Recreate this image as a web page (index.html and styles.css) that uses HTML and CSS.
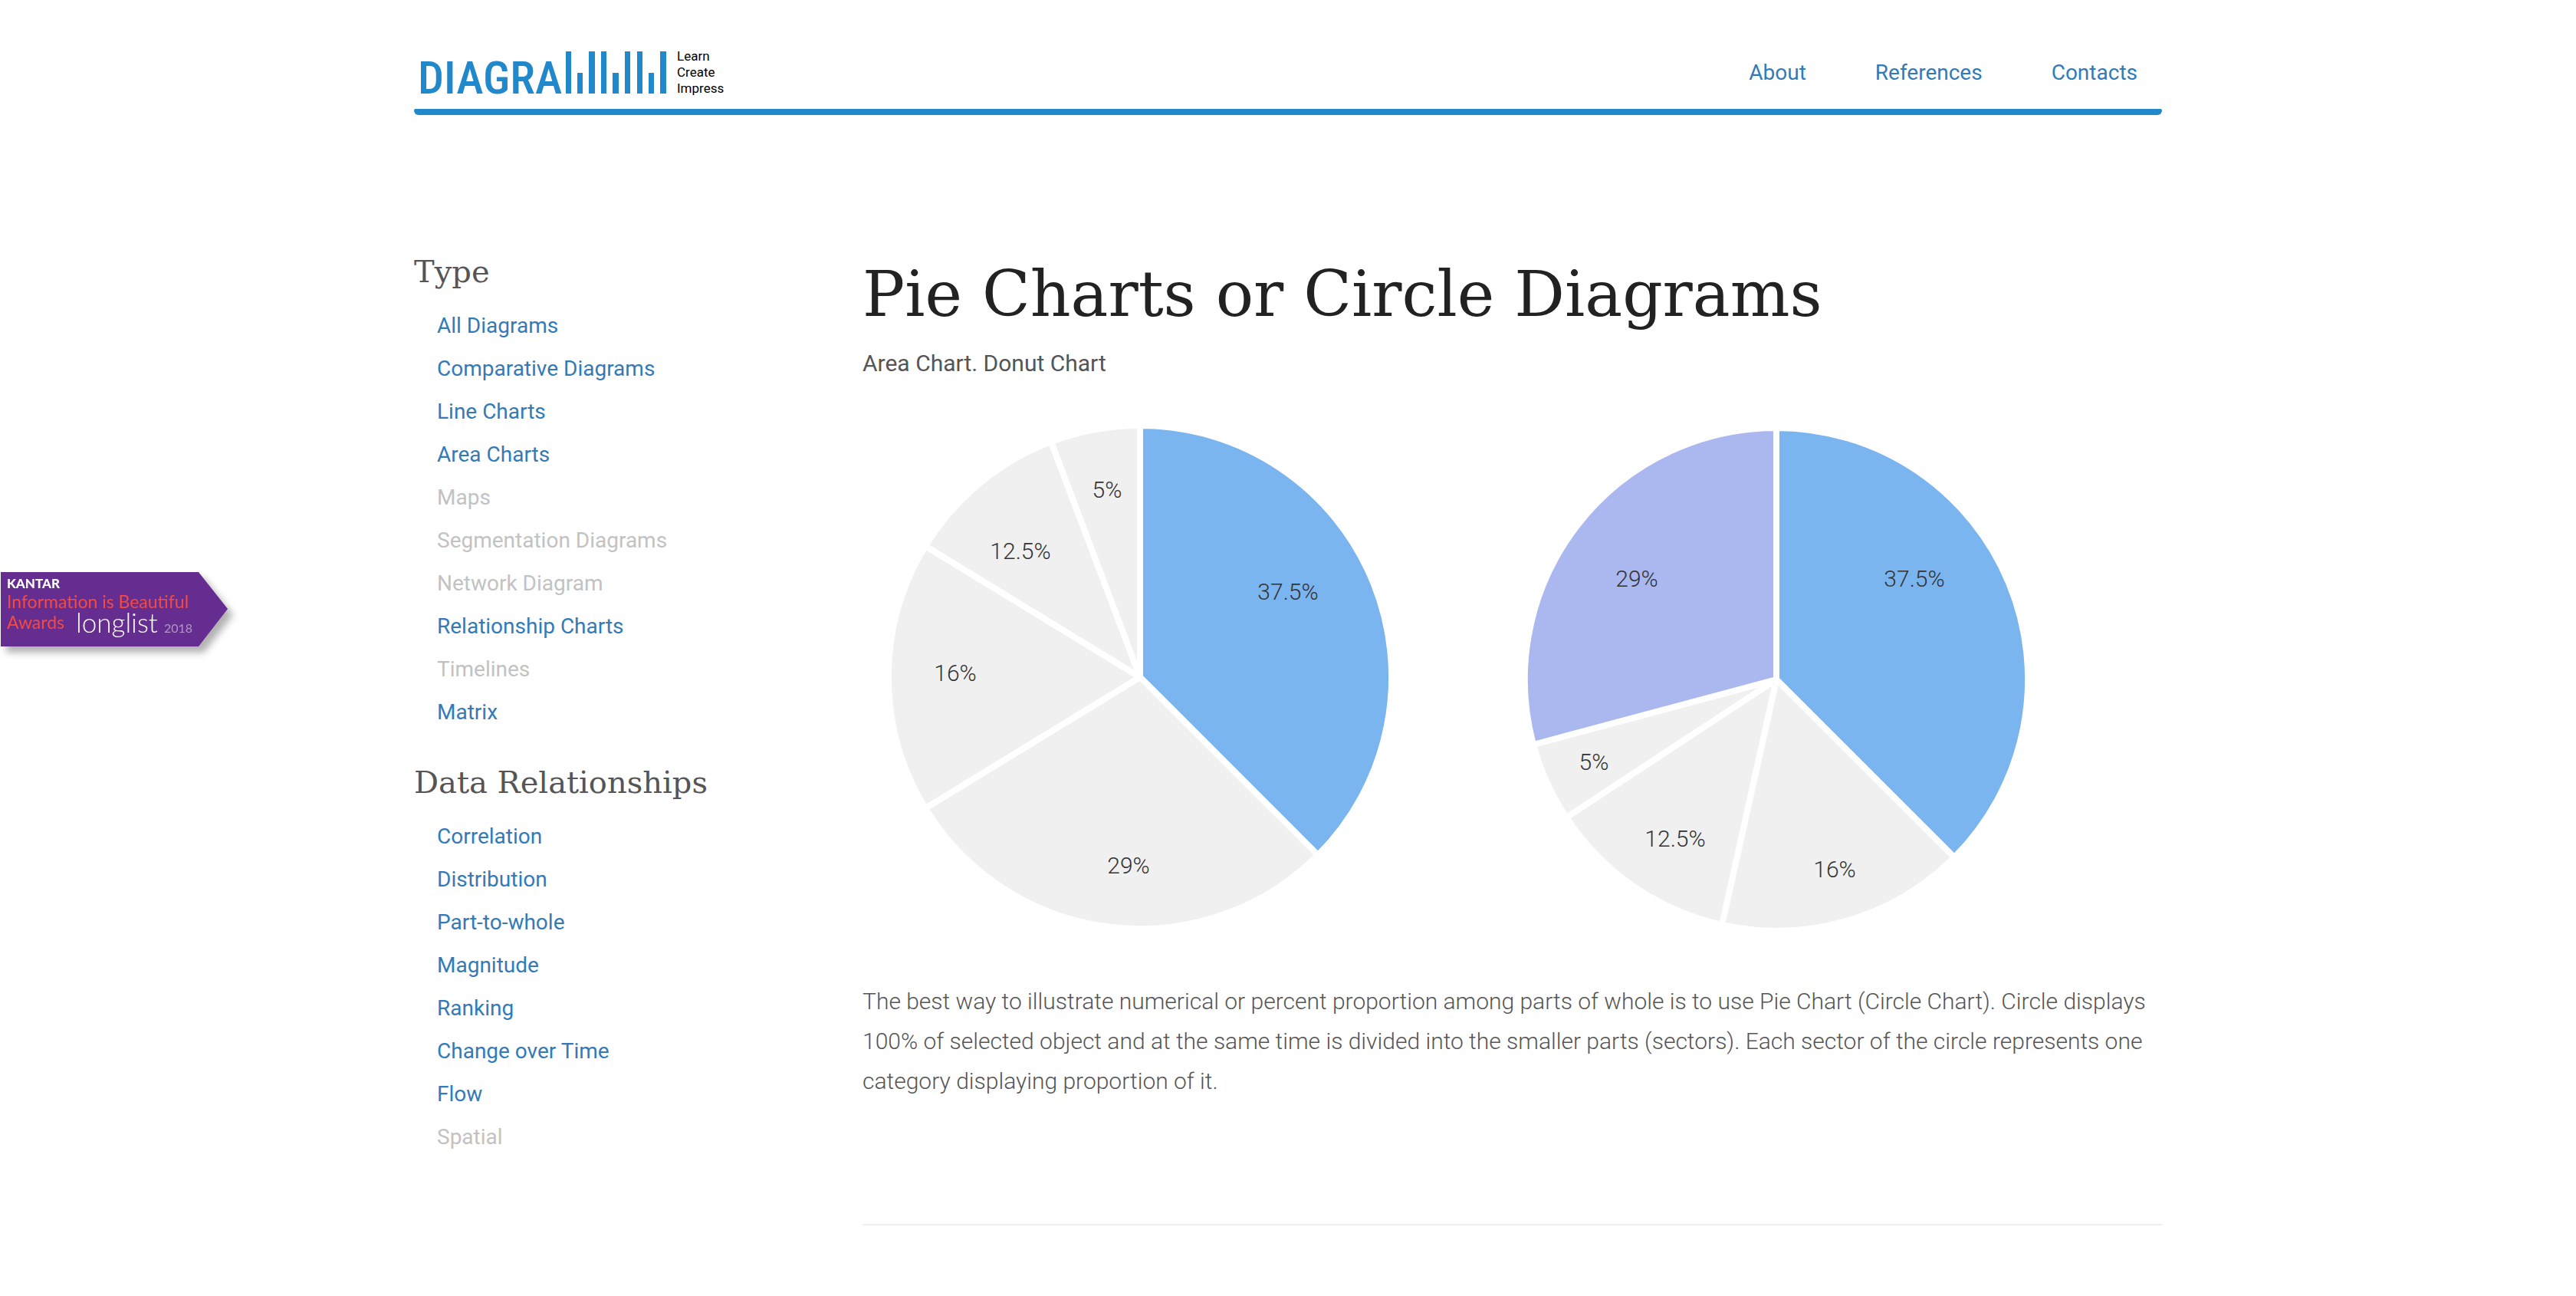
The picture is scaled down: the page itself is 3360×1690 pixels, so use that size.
FILE: index.html
```html
<!DOCTYPE html>
<html lang="en">
<head>
  <meta charset="UTF-8"/>
  <meta name="viewport" content="width=device-width,initial-scale=1.0"/>
  <title>Pie Charts or Circle Diagrams</title>
  <link rel="stylesheet" href="styles.css">
</head>
<body>
  <a class="award" href="#award" aria-label="Kantar Information is Beautiful Awards longlist 2018">
    <svg width="320" height="120" viewBox="0 0 320 120">
      <path class="award-bg" d="M1 0H259L297 48L259 97H1z"/>
      <text class="award-kantar" x="9" y="21">KANTAR</text>
      <text class="award-title" x="9" y="47">Information is Beautiful</text>
      <text class="award-title" x="9" y="74">Awards</text>
      <text class="award-longlist" x="99" y="79">longlist</text>
      <text class="award-year" x="214" y="79">2018</text>
    </svg>
  </a>

  <div class="container">
    <header class="header">
      <a class="brand" href="#home">
        <svg class="logo" width="320" height="55" viewBox="0 0 320 55">
          <text x="-4" y="55">DIAGRA</text>
          <path d="M189 0h7v55h-7zM204 28h7v27h-7zM219 0h8v55h-8zM235 0h7v55h-7zM250 28h8v27h-8zM266 0h7v55h-7zM282 0h7v55h-7zM297 28h7v27h-7zM312 0h8v55h-8z"/>
        </svg>
        <span class="slogan">Learn<br>Create<br>Impress</span>
      </a>
      <nav class="top-nav">
        <a href="#about">About</a>
        <a href="#references">References</a>
        <a href="#contacts">Contacts</a>
      </nav>
    </header>

    <div class="row">
      <aside class="sidebar">
        <h3>Type</h3>
        <ul>
          <li><a href="#all">All Diagrams</a></li>
          <li><a href="#comparative">Comparative Diagrams</a></li>
          <li><a href="#line">Line Charts</a></li>
          <li><a href="#area">Area Charts</a></li>
          <li>Maps</li>
          <li>Segmentation Diagrams</li>
          <li>Network Diagram</li>
          <li><a href="#relationship">Relationship Charts</a></li>
          <li>Timelines</li>
          <li><a href="#matrix">Matrix</a></li>
        </ul>
        <h3>Data Relationships</h3>
        <ul>
          <li><a href="#correlation">Correlation</a></li>
          <li><a href="#distribution">Distribution</a></li>
          <li><a href="#part-to-whole">Part-to-whole</a></li>
          <li><a href="#magnitude">Magnitude</a></li>
          <li><a href="#ranking">Ranking</a></li>
          <li><a href="#change">Change over Time</a></li>
          <li><a href="#flow">Flow</a></li>
          <li>Spatial</li>
        </ul>
      </aside>

      <main class="content">
        <h1>Pie Charts or Circle Diagrams</h1>
        <p class="subtitle">Area Chart. Donut Chart</p>

        <svg class="pies" viewBox="0 0 1695 680">
          <!-- plain order -->
          <g>
            <path class="blue" d="M362 343V15A328 328 0 0 1 594 575z"/>
            <path d="M362 343L594 575A328 328 0 0 1 82 514z"/>
            <path d="M362 343L82 514A328 328 0 0 1 82 172z"/>
            <path d="M362 343L82 172A328 328 0 0 1 246 36z"/>
            <path d="M362 343L246 36A328 328 0 0 1 362 15z"/>
          </g>
          <text x="555" y="242">37.5%</text>
          <text x="347" y="599">29%</text>
          <text x="121" y="348">16%</text>
          <text x="206" y="189">12.5%</text>
          <text x="319" y="109">5%</text>

          <!-- biggest sectors on both sides of 12 o'clock -->
          <g>
            <path class="blue" d="M1192 346V18A328 328 0 0 1 1424 578z"/>
            <path d="M1192 346L1424 578A328 328 0 0 1 1121 666z"/>
            <path d="M1192 346L1121 666A328 328 0 0 1 918 526z"/>
            <path d="M1192 346L918 526A328 328 0 0 1 875 431z"/>
            <path class="violet" d="M1192 346L875 431A328 328 0 0 1 1192 18z"/>
          </g>
          <text x="1372" y="225">37.5%</text>
          <text x="1268" y="604">16%</text>
          <text x="1060" y="564">12.5%</text>
          <text x="954" y="464">5%</text>
          <text x="1010" y="225">29%</text>
        </svg>

        <p class="description">The best way to illustrate numerical or percent proportion among parts of whole is to use Pie Chart (Circle Chart). Circle displays 100% of selected object and at the same time is divided into the smaller parts (sectors). Each sector of the circle represents one category displaying proportion of it.</p>
        <hr>
      </main>
    </div>
  </div>
</body>
</html>
```
FILE: styles.css
```css
:root {
  --brand: #2288cc;
  --link: #337ab7;
  --text: #555;
  --heading: #222;
  --disabled: #c2c2c2;
  --slab: "Roboto Slab", "DejaVu Serif", serif;
}
* { box-sizing: border-box; }
body {
  margin: 0;
  background: #fff; color: var(--text);
  font-family: Roboto, sans-serif;
  font-size: 28px;
}
a { color: var(--link); text-decoration: none; }
a:hover { text-decoration: underline; }

.container {
  max-width: 2340px;
  margin: 0 auto;
  padding: 0 30px;
}

/* Header */
.header {
  display: flex; align-items: center; justify-content: space-between;
  height: 150px;
  padding: 38px 32px 0 9px;
  position: relative;
}
.header::after {
  content: "";
  position: absolute; left: 0; right: 0; bottom: 0;
  height: 8px;
  background: var(--brand);
  border-radius: 2px 2px 6px 6px;
}
.brand {
  display: flex; align-items: center; gap: 14px;
}
.logo { fill: var(--brand); overflow: visible; }
.logo text {
  font-family: "Roboto Condensed", "Liberation Sans Narrow", "DejaVu Sans Condensed", sans-serif;
  font-size: 60px; font-weight: 500;
}
.slogan {
  color: #000;
  font-size: 17px; line-height: 21px;
}
.top-nav { display: flex; gap: 90px; }

/* Columns */
.row {
  display: grid; grid-template-columns: 525px 1fr; column-gap: 60px;
  padding-top: 176px;
}
.sidebar h3 {
  margin: 0 0 15px;
  font: 400 40px/56px var(--slab);
}
.sidebar ul {
  margin: 0 0 35px; padding: 0 0 0 30px;
  list-style: none;
  line-height: 56px;
  color: var(--disabled);
}

.content h1 {
  margin: 8px 0 14px;
  color: var(--heading);
  font: 400 82px/100px var(--slab);
}
.subtitle {
  margin: 0 0 40px;
  font-size: 30px; line-height: 52px;
}

.pies {
  display: block;
  width: 100%;
  margin-bottom: 60px;
}
.pies path {
  fill: #f0f0f0;
  stroke: #fff; stroke-width: 8px; stroke-linejoin: bevel;
}
.pies .blue { fill: #7ab5f0; }
.pies .violet { fill: #abb7ef; }
.pies text {
  fill: #333;
  font-size: 30px; font-weight: 300;
  text-anchor: middle;
}

.description {
  margin: 0 0 160px;
  font-size: 30px; font-weight: 300; line-height: 52px;
}
hr {
  margin: 0;
  border: 0; border-top: 2px solid #eee;
}

/* Award ribbon stuck to the left edge */
.award {
  position: fixed; left: 0; top: 746px;
  height: 120px;
  font-family: Lato, sans-serif;
}
.award-bg {
  fill: #662d91;
  filter: drop-shadow(7px 8px 5px rgba(0,0,0,0.3));
}
.award-kantar { fill: #fff; font-size: 17px; font-weight: 900; }
.award-title { fill: #f44b41; font-size: 23px; }
.award-longlist { fill: #fff; font-size: 35px; font-weight: 300; }
.award-year { fill: #b296c8; font-size: 16px; }
```
